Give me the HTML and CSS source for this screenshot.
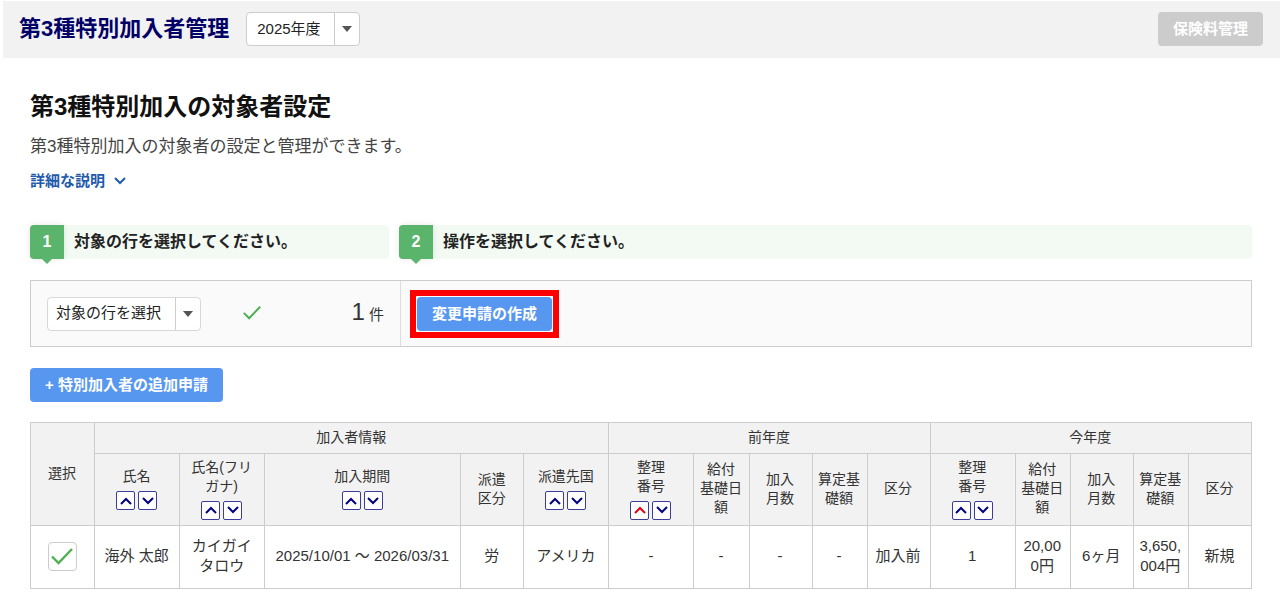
FILE: index.html
```html
<!DOCTYPE html>
<html lang="ja">
<head>
<meta charset="utf-8">
<title>第3種特別加入者管理</title>
<link rel="stylesheet" href="styles.css">
</head>
<body>
<svg class="sprite" aria-hidden="true">
  <symbol id="up" viewBox="0 0 12 8"><path d="M1 7 6 2l5 5"/></symbol>
  <symbol id="down" viewBox="0 0 12 8"><path d="M1 1l5 5 5-5"/></symbol>
  <symbol id="check" viewBox="0 0 22 18"><path d="M1 9.500l6.500 6.500L21 2"/></symbol>
</svg>
<header class="topbar">
  <h1 class="topbar-title">第3種特別加入者管理</h1>
  <div class="select">
    <select class="select-year" aria-label="年度"><option>2025年度</option></select>
    <span class="select-arrow"></span>
  </div>
  <button class="btn btn-disabled" type="button" disabled>保険料管理</button>
</header>
<main class="content">
  <h2 class="title">第3種特別加入の対象者設定</h2>
  <p class="lead">第3種特別加入の対象者の設定と管理ができます。</p>
  <a class="detail" href="#detail">詳細な説明 <svg class="chevron"><use href="#down"/></svg></a>

  <div class="steps">
    <div class="step"><span class="step-no">1</span><span class="step-text">対象の行を選択してください。</span></div>
    <div class="step"><span class="step-no">2</span><span class="step-text">操作を選択してください。</span></div>
  </div>

  <div class="panel">
    <div class="panel-target">
      <div class="select">
        <select class="select-rows" aria-label="対象の行を選択"><option>対象の行を選択</option></select>
        <span class="select-arrow"></span>
      </div>
      <svg class="tick"><use href="#check"/></svg>
      <p class="count"><span class="count-no">1</span> 件</p>
    </div>
    <div class="panel-action">
      <div class="highlight"><button class="btn" type="button">変更申請の作成</button></div>
    </div>
  </div>

  <button class="btn btn-add" type="button">+ 特別加入者の追加申請</button>

  <table class="members">
    <colgroup>
      <col class="w-64"><col class="w-86"><col class="w-86"><col class="w-196"><col class="w-63"><col class="w-86">
      <col class="w-86"><col class="w-56"><col class="w-63"><col class="w-56"><col class="w-63">
      <col class="w-86"><col class="w-56"><col class="w-63"><col class="w-56"><col class="w-63">
    </colgroup>
    <thead>
      <tr class="groups">
        <th rowspan="2">選択</th><th colspan="5">加入者情報</th><th colspan="5">前年度</th><th colspan="5">今年度</th>
      </tr>
      <tr class="columns">
        <th>氏名<div class="sort"><button type="button" aria-label="昇順"><svg><use href="#up"/></svg></button><button type="button" aria-label="降順"><svg><use href="#down"/></svg></button></div></th>
        <th>氏名(フリ<br>ガナ)<div class="sort"><button type="button" aria-label="昇順"><svg><use href="#up"/></svg></button><button type="button" aria-label="降順"><svg><use href="#down"/></svg></button></div></th>
        <th>加入期間<div class="sort"><button type="button" aria-label="昇順"><svg><use href="#up"/></svg></button><button type="button" aria-label="降順"><svg><use href="#down"/></svg></button></div></th>
        <th>派遣<br>区分</th>
        <th>派遣先国<div class="sort"><button type="button" aria-label="昇順"><svg><use href="#up"/></svg></button><button type="button" aria-label="降順"><svg><use href="#down"/></svg></button></div></th>
        <th>整理<br>番号<div class="sort"><button class="active" type="button" aria-label="昇順"><svg><use href="#up"/></svg></button><button type="button" aria-label="降順"><svg><use href="#down"/></svg></button></div></th>
        <th>給付<br>基礎日額</th><th>加入<br>月数</th><th>算定基礎額</th><th>区分</th>
        <th>整理<br>番号<div class="sort"><button type="button" aria-label="昇順"><svg><use href="#up"/></svg></button><button type="button" aria-label="降順"><svg><use href="#down"/></svg></button></div></th>
        <th>給付<br>基礎日額</th><th>加入<br>月数</th><th>算定基礎額</th><th>区分</th>
      </tr>
    </thead>
    <tbody>
      <tr>
        <td><label class="checkbox"><input type="checkbox" checked aria-label="海外 太郎を選択"><svg><use href="#check"/></svg></label></td>
        <td>海外 太郎</td><td>カイガイ<br>タロウ</td><td>2025/10/01 ～ 2026/03/31</td><td>労</td><td>アメリカ</td>
        <td>-</td><td>-</td><td>-</td><td>-</td><td>加入前</td>
        <td>1</td><td>20,000円</td><td>6ヶ月</td><td>3,650,004円</td><td>新規</td>
      </tr>
    </tbody>
  </table>
</main>
</body>
</html>
```
FILE: styles.css
```css
* { box-sizing: border-box; }
body {
  margin: 0;
  background: #fff;
  color: #333;
  font: 15px/20px "Liberation Sans", "Noto Sans CJK JP", sans-serif;
}
h1, h2, p { margin: 0; }
svg { fill: none; stroke: currentColor; }
.sprite { display: none; }
button, select { font: inherit; }

.topbar {
  display: flex;
  align-items: center;
  gap: 17px;
  height: 57px;
  margin: 1px 0 0 3px;
  padding: 0 17px 1px 16px;
  background: #f2f2f2;
}
.topbar-title { color: #000066; font-size: 22px; line-height: 32px; }

.btn {
  height: 34px;
  padding: 0 15px 1px;
  border: 0;
  border-radius: 4px;
  background: #5897f0;
  color: #fff;
  font-weight: bold;
  white-space: nowrap;
}
.btn-disabled { margin-left: auto; background: #ccc; }

.select { position: relative; }
.select select {
  display: block;
  height: 34px;
  padding: 0 34px 1px 9px;
  border: 1px solid #ccc;
  border-radius: 4px;
  background: #fff;
  color: #222;
  appearance: none;
}
.select .select-year { width: 114px; padding-left: 10px; }
.select .select-rows { width: 154px; padding-left: 8px; border-color: #d8d8d8; }
.select-arrow {
  position: absolute;
  inset: 1px 1px 1px auto;
  display: grid;
  place-items: center;
  width: 25px;
  border-left: 1px solid #ccc;
  pointer-events: none;
}
.select-arrow::before {
  content: "";
  border: 5px solid transparent;
  border-top: 6px solid #555;
  border-bottom: 0;
}

.content { padding: 32px 28px 14px 30px; }
.title { color: #111; font-size: 24px; line-height: 34px; }
.lead { margin-top: 12px; color: #444; font-size: 17px; line-height: 22px; }
.detail {
  display: inline-flex;
  align-items: center;
  gap: 9px;
  margin-top: 13px;
  color: #1f5bab;
  font-weight: bold;
  line-height: 20px;
  text-decoration: none;
}
.chevron { width: 12px; height: 8px; stroke-width: 2; }

.steps {
  display: grid;
  grid-template-columns: 359px 1fr;
  gap: 10px;
  margin-top: 34px;
}
.step {
  display: flex;
  align-items: center;
  gap: 10px;
  height: 34px;
  border-radius: 4px;
  background: #f3faf4;
  color: #222;
  font-size: 16px;
  font-weight: bold;
}
.step-no {
  position: relative;
  width: 34px;
  border-radius: 4px 0 0 4px;
  background: #5bb46b;
  box-shadow: 0 0 6px #0000001a;
  color: #fff;
  line-height: 34px;
  text-align: center;
}
.step-no::after {
  content: "";
  position: absolute;
  top: 34px;
  left: 12px;
  border: 5px solid transparent;
  border-top-color: #5bb46b;
  border-bottom: 0;
}

.panel {
  display: grid;
  grid-template-columns: 370px 1fr;
  margin-top: 21px;
  border: 1px solid #ccc;
  background: #fafafa;
}
.panel-target {
  display: flex;
  align-items: center;
  padding: 0 16px;
  border-right: 1px solid #ddd;
}
.tick { width: 18px; height: 15px; margin: 0 0 3px 42px; color: #4caf50; stroke-width: 2.4; }
.count { margin-left: auto; }
.count-no { font-size: 24px; }
.panel-action { padding: 9px 9px 8px; }
.highlight { display: inline-block; padding: 1px; border: 6px solid #f00; background: #fff; vertical-align: top; }
.highlight .btn { display: block; }
.btn-add { display: block; margin-top: 21px; }

.members {
  width: 100%;
  margin-top: 20px;
  border-collapse: collapse;
  table-layout: fixed;
  text-align: center;
  word-break: break-all;
}
.members th, .members td { padding: 0 5px 2px 4px; border: 1px solid #ccc; }
.members th {
  background: #f2f2f2;
  font-size: 14px;
  font-weight: normal;
  line-height: 19px;
}
.members .groups { height: 31px; }
.members .columns { height: 72px; }
.members tbody tr { height: 63px; }
.w-56 { width: 55px; }
.w-63 { width: 63px; }
.w-64 { width: 64px; }
.w-86 { width: 85px; }
.w-196 { width: 196px; }

.sort { display: flex; justify-content: center; gap: 3px; margin-top: 5px; }
.sort button {
  display: grid;
  place-items: center;
  width: 19px;
  height: 19px;
  padding: 0;
  border: 1px solid #3c3c9a;
  border-radius: 2px;
  background: #fff;
  color: #000080;
}
.sort .active { color: #e60012; }
.sort svg { width: 12px; height: 8px; stroke-width: 2; }

.checkbox { display: inline-grid; vertical-align: middle; }
.checkbox input, .checkbox svg { grid-area: 1 / 1; place-self: center; margin: 0; }
.checkbox input {
  width: 29px;
  height: 29px;
  border: 1px solid #ccc;
  border-radius: 4px;
  background: #fff;
  appearance: none;
}
.checkbox svg { z-index: 1; width: 22px; height: 18px; color: #4caf50; stroke-width: 2.3; pointer-events: none; }
```
